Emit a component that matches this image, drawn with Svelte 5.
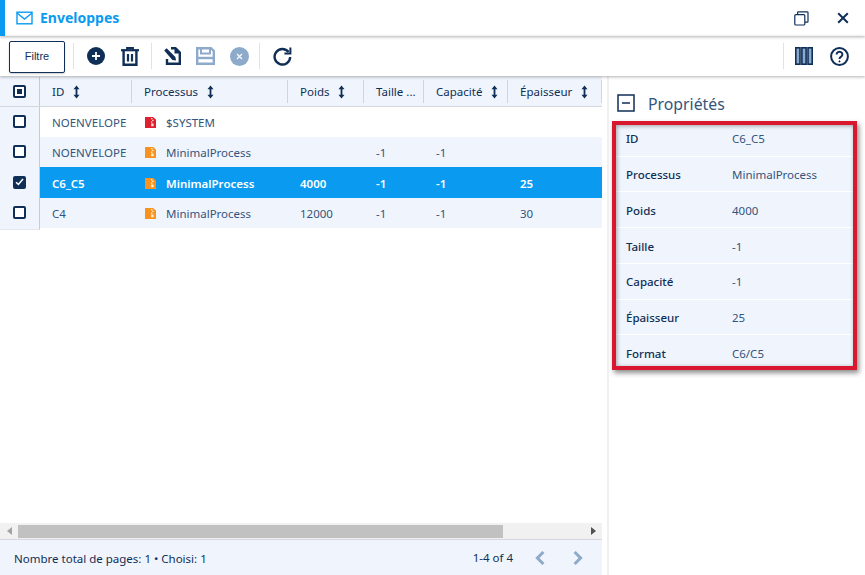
<script>
    const columns = [
        { label: "ID", sort: true },
        { label: "Processus", sort: true },
        { label: "Poids", sort: true },
        { label: "Taille ...", sort: false },
        { label: "Capacité", sort: true },
        { label: "Épaisseur", sort: true },
    ];

    const rows = [
        { id: "NOENVELOPE", process: "$SYSTEM", color: "#e0202f", weight: "", size: "", capacity: "", thickness: "" },
        { id: "NOENVELOPE", process: "MinimalProcess", color: "#f7931e", weight: "", size: "-1", capacity: "-1", thickness: "" },
        { id: "C6_C5", process: "MinimalProcess", color: "#f7931e", weight: "4000", size: "-1", capacity: "-1", thickness: "25", selected: true },
        { id: "C4", process: "MinimalProcess", color: "#f7931e", weight: "12000", size: "-1", capacity: "-1", thickness: "30" },
    ];

    const properties = [
        ["ID", "C6_C5"],
        ["Processus", "MinimalProcess"],
        ["Poids", "4000"],
        ["Taille", "-1"],
        ["Capacité", "-1"],
        ["Épaisseur", "25"],
        ["Format", "C6/C5"],
    ];
</script>

{#snippet sortIcon()}
    <svg class="sort" width="7" height="14" viewBox="0 0 7 14">
        <path d="M3.5 0.5 L6.5 4.2 H4.4 V9.8 H6.5 L3.5 13.5 L0.5 9.8 H2.6 V4.2 H0.5 Z" fill="#0f2f57" />
    </svg>
{/snippet}

{#snippet zipIcon(color)}
    <svg class="zip" width="11" height="11" viewBox="0 0 11 11">
        <path d="M0 0 H8 L11 2.6 V11 H0 Z" fill={color} />
        <path d="M6 1 h1.4 v1.2 h-1.4 Z M7.2 2.8 h1.4 v1.2 h-1.4 Z M6 4.6 h1.4 v1.2 h-1.4 Z M6.2 6.6 h2.4 v2.6 h-2.4 Z" fill="#fff" opacity="0.85" />
    </svg>
{/snippet}

<div class="window">
    <header class="titlebar">
        <div class="title">
            <svg width="17" height="14" viewBox="0 0 17 14" fill="none" stroke="#0a9bf0" stroke-width="1.4">
                <rect x="1" y="1.2" width="15" height="11.6" />
                <path d="M1 2 L8.5 8 L16 2" />
            </svg>
            <span>Enveloppes</span>
        </div>
        <div class="window-actions">
            <svg width="15" height="15" viewBox="0 0 15 15" fill="none" stroke="#0f2f57" stroke-width="1.2">
                <rect x="0.8" y="3.6" width="10" height="10.4" rx="1" />
                <path d="M3.6 3.4 V1.6 a0.8 0.8 0 0 1 0.8 -0.8 H13.2 a0.8 0.8 0 0 1 0.8 0.8 V10.4 a0.8 0.8 0 0 1 -0.8 0.8 H11" />
            </svg>
            <svg width="12" height="12" viewBox="0 0 12 12" fill="none" stroke="#0f2f57" stroke-width="2">
                <path d="M1.2 1.2 L10.8 10.8 M10.8 1.2 L1.2 10.8" />
            </svg>
        </div>
    </header>

    <div class="toolbar">
        <button class="filter">Filtre</button>
        <span class="sep"></span>
        <div class="tool-group first">
            <svg width="18" height="18" viewBox="0 0 18 18">
                <circle cx="9" cy="9" r="9" fill="#0f2f57" />
                <path d="M9 5 V13 M5 9 H13" stroke="#fff" stroke-width="1.8" />
            </svg>
            <svg width="18" height="19" viewBox="0 0 18 19" fill="none" stroke="#0f2f57" stroke-width="2.4">
                <path d="M0 3.2 H18" stroke-width="2.2" />
                <path d="M6 3 V1 H12 V3" stroke-width="1.8" />
                <path d="M2.6 3.5 V17.8 H15.4 V3.5" />
                <path d="M7 7 V14.5 M11 7 V14.5" stroke-width="2.2" />
            </svg>
        </div>
        <span class="sep"></span>
        <div class="tool-group second">
            <svg width="17" height="18" viewBox="0 0 17 18" fill="none">
                <path d="M7 1.2 H11.5 L15.8 5.5 V16.8 H3 V12" stroke="#0f2f57" stroke-width="2.4" />
                <path d="M10.5 0.5 L16.5 6.5 H10.5 Z" fill="#0f2f57" />
                <path d="M0.2 3.6 L2.6 1.2 L11.4 10 L12 13.6 L8.4 13 Z" fill="#0f2f57" />
            </svg>
            <svg width="19" height="18" viewBox="0 0 19 18" fill="none" stroke="#8eaacb" stroke-width="2.4">
                <path d="M1.2 1.2 H15 L17.8 4 V16.8 H1.2 Z" />
                <path d="M5 1.2 V6.5 H14 V1.2" stroke-width="2" />
                <path d="M1.2 11 H17.8" />
            </svg>
            <svg width="19" height="19" viewBox="0 0 19 19">
                <circle cx="9.5" cy="9.5" r="9.5" fill="#8eaacb" />
                <path d="M7 7 L12 12 M12 7 L7 12" stroke="#fff" stroke-width="1.1" />
            </svg>
        </div>
        <span class="sep"></span>
        <svg class="refresh" width="19" height="19" viewBox="0 0 19 19" fill="none" stroke="#0f2f57" stroke-width="2.4">
            <path d="M15.6 5 A7.8 7.8 0 1 0 17.2 10" />
            <path d="M17.4 0.6 V6.6 H11.4" stroke-width="2" />
        </svg>
        <span class="grow"></span>
        <span class="sep"></span>
        <svg class="cols" width="18" height="18" viewBox="0 0 18 18" fill="#8eaacb" stroke="#0f2f57" stroke-width="1.6">
            <rect x="0.8" y="0.8" width="4.2" height="16.4" />
            <rect x="6.9" y="0.8" width="4.2" height="16.4" />
            <rect x="13" y="0.8" width="4.2" height="16.4" />
        </svg>
        <svg class="help" width="19" height="19" viewBox="0 0 19 19" fill="none" stroke="#0f2f57" stroke-width="2">
            <circle cx="9.5" cy="9.5" r="8.4" />
            <path d="M6.6 7.4 a2.9 2.7 0 1 1 4.5 2.3 c-1 .6 -1.6 1 -1.6 2.3" />
            <circle cx="9.5" cy="14.4" r="0.6" fill="#0f2f57" stroke-width="1" />
        </svg>
    </div>

    <main class="content">
        <section class="grid-panel">
            <div class="grid-head">
                <div class="check-cell">
                    <span class="checkbox partial"><i></i></span>
                </div>
                {#each columns as col}
                    <div class="head-cell">
                        <span>{col.label}</span>
                        {#if col.sort}{@render sortIcon()}{/if}
                    </div>
                {/each}
            </div>

            <div class="grid-body">
                {#each rows as row, i}
                    <div class="grid-row" class:alt={i % 2 === 1} class:selected={row.selected}>
                        <div class="check-cell">
                            <span class="checkbox" class:checked={row.selected}>
                                {#if row.selected}
                                    <svg width="9" height="8" viewBox="0 0 9 8" fill="none" stroke="#fff" stroke-width="1.5">
                                        <path d="M1 4.2 L3.4 6.4 L8 1" />
                                    </svg>
                                {/if}
                            </span>
                        </div>
                        <div class="cell">{row.id}</div>
                        <div class="cell process">
                            {@render zipIcon(row.color)}
                            <span>{row.process}</span>
                        </div>
                        <div class="cell">{row.weight}</div>
                        <div class="cell">{row.size}</div>
                        <div class="cell">{row.capacity}</div>
                        <div class="cell">{row.thickness}</div>
                    </div>
                {/each}
            </div>

            <div class="scrollbar">
                <span class="arrow left"></span>
                <div class="track"><div class="thumb"></div></div>
                <span class="arrow right"></span>
            </div>

            <footer class="pager">
                <span class="pager-info">Nombre total de pages: 1 • Choisi: 1</span>
                <div class="pager-right">
                    <span>1-4 of 4</span>
                    <svg width="10" height="14" viewBox="0 0 10 14" fill="none" stroke="#8eaacb" stroke-width="3">
                        <path d="M8.4 1 L2.4 7 L8.4 13" />
                    </svg>
                    <svg width="10" height="14" viewBox="0 0 10 14" fill="none" stroke="#8eaacb" stroke-width="3">
                        <path d="M1.6 1 L7.6 7 L1.6 13" />
                    </svg>
                </div>
            </footer>
        </section>

        <aside class="props-panel">
            <div class="props-title">
                <svg width="18" height="18" viewBox="0 0 18 18" fill="none" stroke="#0f2f57" stroke-width="1.5">
                    <rect x="1" y="1" width="16" height="16" />
                    <path d="M5 9 H13" />
                </svg>
                <span>Propriétés</span>
            </div>
            <div class="props-box">
                {#each properties as [name, value]}
                    <div class="prop-row">
                        <span class="prop-name">{name}</span>
                        <span class="prop-value">{value}</span>
                    </div>
                {/each}
            </div>
        </aside>
    </main>
</div>

<style>
    :global(body) {
        margin: 0;
        background: #fff;
    }

    .window {
        width: 865px;
        height: 575px;
        display: flex;
        flex-direction: column;
        overflow: hidden;
        font-family: "Noto Sans", sans-serif;
        font-size: 11.5px;
        color: #0f2f57;
        background: #fff;
    }

    /* Title bar */
    .titlebar {
        height: 36px;
        flex: none;
        display: flex;
        justify-content: space-between;
        align-items: center;
        border-left: 5px solid #0a9bf0;
        box-shadow: 0 1px 3px rgba(0, 0, 0, 0.3);
        position: relative;
        z-index: 3;
    }

    .title {
        display: flex;
        align-items: center;
        gap: 7px;
        padding-left: 11px;
        color: #0a9bf0;
        font-size: 14px;
        font-weight: 700;
    }

    .title span {
        padding-bottom: 2px;
    }

    .window-actions {
        display: flex;
        align-items: center;
        gap: 28px;
        padding-right: 16px;
    }

    /* Toolbar */
    .toolbar {
        height: 40px;
        flex: none;
        display: flex;
        align-items: center;
        padding-left: 9px;
        box-shadow: 0 1px 3px rgba(0, 0, 0, 0.3);
        position: relative;
        z-index: 2;
    }

    .filter {
        width: 56px;
        height: 32px;
        margin-top: 2px;
        padding: 0 0 2px;
        border: 1px solid #0f2f57;
        border-radius: 2px;
        background: #fff;
        color: #0f2f57;
        font-family: "Liberation Sans", sans-serif;
        font-size: 11px;
        box-shadow: 0 1px 2px rgba(0, 0, 0, 0.2);
    }

    .sep {
        width: 1px;
        height: 26px;
        background: #dde3ea;
    }

    .filter + .sep {
        margin-left: 8px;
    }

    .tool-group {
        display: flex;
        align-items: center;
    }

    .tool-group.first {
        gap: 16px;
        padding: 0 12px 0 13px;
    }

    .tool-group.second {
        gap: 15px;
        padding: 0 10px 0 12px;
    }

    .refresh {
        margin-left: 13px;
    }

    .grow {
        flex: 1;
    }

    .cols {
        margin-left: 11px;
    }

    .help {
        margin: 0 16px 0 17px;
    }

    /* Main area */
    .content {
        flex: 1;
        min-height: 0;
        display: flex;
    }

    .grid-panel {
        width: 602px;
        flex: none;
        display: flex;
        flex-direction: column;
        margin-right: 5px;
    }

    .grid-head,
    .grid-row {
        display: grid;
        grid-template-columns: 40px 92px 156px 76px 60px 84px 94px;
    }

    .grid-head {
        height: 29px;
        background: #f0f4fc;
        border-bottom: 1px solid #d4d8de;
        padding-top: 1px;
    }

    .head-cell {
        display: flex;
        align-items: center;
        gap: 9px;
        padding-left: 12px;
        margin: 3px 0;
        border-right: 1px solid #d0d5dc;
        white-space: nowrap;
    }

    .sort {
        flex: none;
        margin-top: 1px;
    }

    .check-cell {
        display: flex;
        align-items: center;
        justify-content: center;
        background: #f0f4fc;
        border-right: 1px solid #c8ccd2;
    }

    .grid-row .check-cell {
        padding-bottom: 2px;
        border-bottom: 1px solid #e4e7ec;
        box-sizing: border-box;
    }

    .checkbox {
        width: 13px;
        height: 13px;
        box-sizing: border-box;
        display: flex;
        align-items: center;
        justify-content: center;
        border: 2px solid #0f2f57;
        border-radius: 2px;
        background: #fff;
    }

    .checkbox.partial i {
        width: 5px;
        height: 5px;
        background: #0f2f57;
    }

    .checkbox.checked {
        background: #0f2f57;
    }

    .grid-body {
        flex: 1;
        min-height: 0;
    }

    .grid-row {
        height: 30px;
        line-height: 32px;
        color: #33557d;
    }

    .grid-row.alt {
        background: #f0f4fc;
    }

    .grid-row.selected {
        height: 31px;
        line-height: 33px;
        background: #0a9bf0;
        color: #fff;
        font-weight: 600;
    }

    .cell {
        padding-left: 12px;
        white-space: nowrap;
    }

    .process {
        display: flex;
        align-items: center;
        gap: 10px;
        padding-left: 13px;
    }

    .zip {
        margin-top: -1px;
    }

    /* Scrollbar */
    .scrollbar {
        height: 16px;
        flex: none;
        display: flex;
        align-items: center;
        background: #f1f1f1;
        border-bottom: 1px solid #d4d8de;
    }

    .arrow {
        width: 18px;
        flex: none;
        display: flex;
        justify-content: center;
    }

    .arrow::before {
        content: "";
        border-style: solid;
        border-width: 4px 5px;
        border-color: transparent;
    }

    .arrow.left::before {
        border-left-width: 0;
        border-right-color: #a3a3a3;
    }

    .arrow.right::before {
        border-right-width: 0;
        border-left-color: #505050;
    }

    .track {
        flex: 1;
        height: 13px;
    }

    .thumb {
        width: 485px;
        height: 100%;
        background: #c1c1c1;
    }

    /* Footer */
    .pager {
        height: 35px;
        flex: none;
        display: flex;
        justify-content: space-between;
        align-items: center;
        padding: 0 19px 0 14px;
        background: #f0f4fc;
    }

    .pager-info {
        padding-top: 2px;
    }

    .pager-right {
        display: flex;
        align-items: center;
        gap: 28px;
    }

    .pager-right span {
        margin-right: -6px;
    }

    /* Properties */
    .props-panel {
        flex: 1;
        min-width: 0;
        padding-left: 1px;
        border-left: 2px solid #f0f0f0;
    }

    .props-title {
        display: flex;
        align-items: center;
        gap: 13px;
        height: 36px;
        padding: 9px 0 0 7px;
        font-size: 15.8px;
        color: #33557d;
    }

    .props-title span {
        padding-top: 2px;
    }

    .props-box {
        width: 245px;
        height: 249px;
        margin-left: 2px;
        display: flex;
        flex-direction: column;
        background: #f0f4fc;
        box-shadow: 2px 3px 5px rgba(0, 0, 0, 0.45);
        position: relative;
    }

    /* red highlight drawn over the rows */
    .props-box::after {
        content: "";
        position: absolute;
        inset: 0;
        border: 4px solid #d9172f;
        box-shadow: inset 1px 1px 4px rgba(0, 0, 0, 0.35);
        pointer-events: none;
    }

    .prop-row {
        flex: 1;
        display: flex;
        align-items: center;
        padding: 1px 0 0 14px;
        border-bottom: 1px solid #fff;
    }

    .prop-row:last-child {
        border-bottom: none;
    }

    .prop-name {
        width: 106px;
        flex: none;
        color: #0f2f57;
        font-weight: 500;
    }

    .prop-value {
        color: #33557d;
    }
</style>
